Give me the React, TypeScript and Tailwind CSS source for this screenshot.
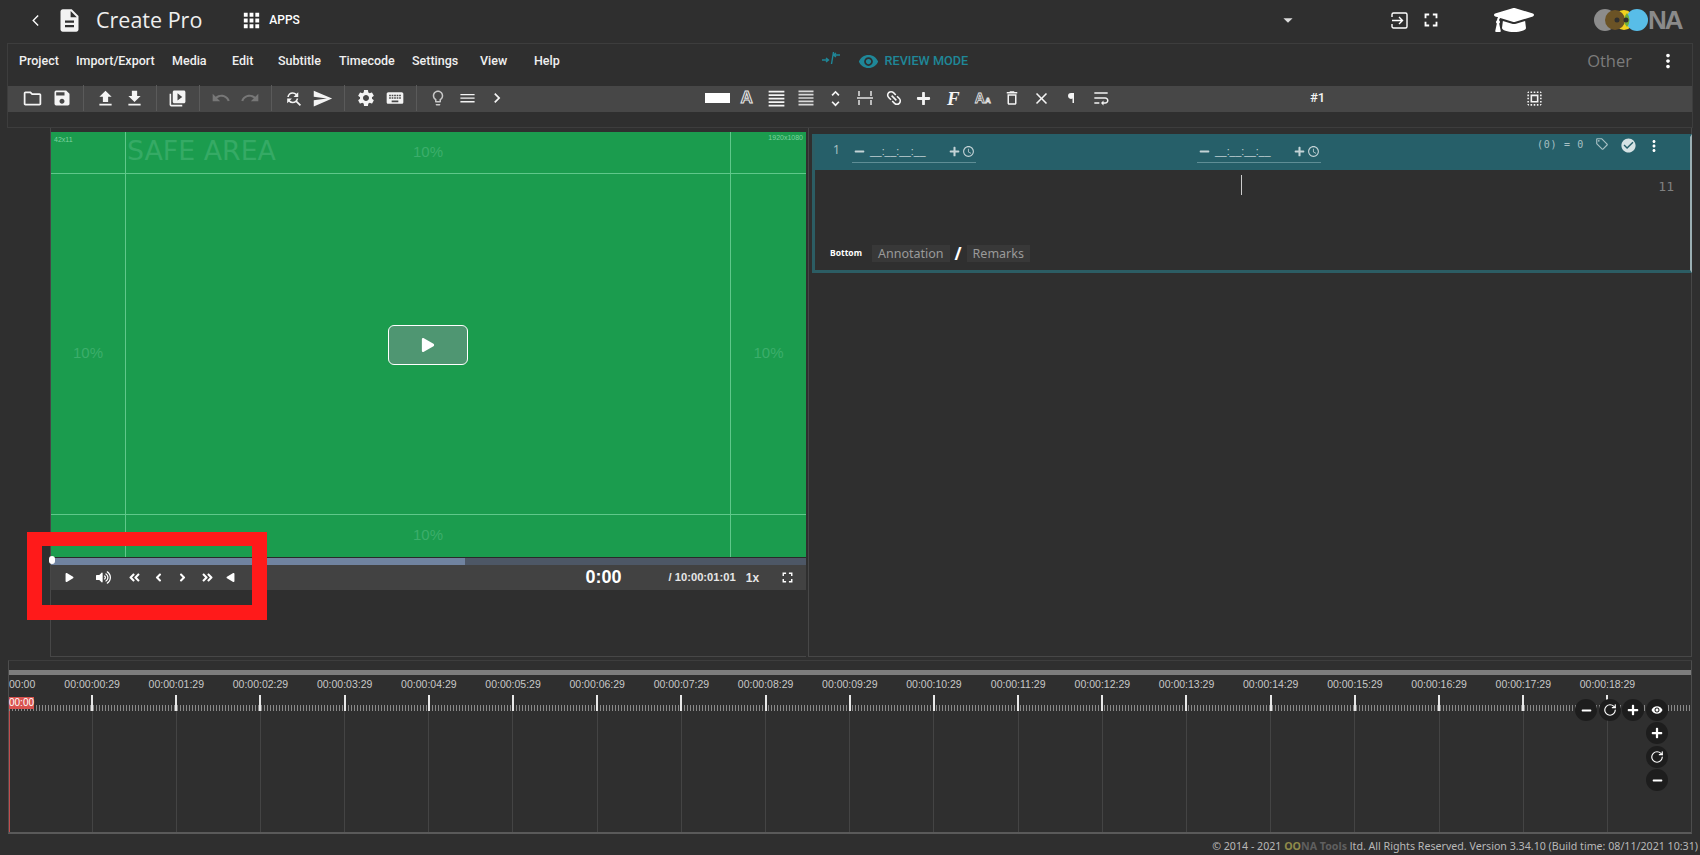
import {
  MdArrowBackIosNew,
  MdDescription,
  MdApps,
  MdArrowDropDown,
  MdOutlineFolder,
  MdSave,
  MdFileUpload,
  MdFileDownload,
  MdVideoLibrary,
  MdUndo,
  MdRedo,
  MdFindReplace,
  MdSend,
  MdSettings,
  MdKeyboard,
  MdOutlineLightbulb,
  MdChevronRight,
  MdFormatAlignJustify,
  MdUnfoldMore,
  MdLink,
  MdDeleteOutline,
  MdClose,
  MdWrapText,
  MdSelectAll,
  MdFullscreen,
  MdMoreVert,
  MdVisibility,
  MdAccessTime,
  MdOutlineLocalOffer,
  MdCheckCircle,
  MdDehaze,
} from "react-icons/md";
import {
  FaGraduationCap,
  FaPlay,
  FaPlus,
  FaMinus,
  FaVolumeUp,
  FaAngleDoubleLeft,
  FaAngleDoubleRight,
  FaAngleLeft,
  FaAngleRight,
} from "react-icons/fa";
import { RotateCw } from "lucide-react";

const menus = [
  { label: "Project", w: "w-[57px]" },
  { label: "Import/Export", w: "w-[96px]" },
  { label: "Media", w: "w-[60px]" },
  { label: "Edit", w: "w-[46px]" },
  { label: "Subtitle", w: "w-[61px]" },
  { label: "Timecode", w: "w-[73px]" },
  { label: "Settings", w: "w-[68px]" },
  { label: "View", w: "w-[54px]" },
  { label: "Help", w: "w-[50px]" },
];

const marks = Array.from({ length: 19 }, (_, i) => `00:00:${String(i).padStart(2, "0")}:29`);

function Slot({ children }: { children: React.ReactNode }) {
  return <div className="w-[29.5px] h-full flex items-center justify-center shrink-0">{children}</div>;
}

function Sep() {
  return (
    <div className="w-[13.5px] h-[26px] flex justify-center shrink-0">
      <div className="w-px h-full bg-[#5a5a5a]" />
    </div>
  );
}

function ExitIcon() {
  return (
    <svg width="17" height="17" viewBox="0 0 17 17" fill="none" stroke="white" strokeWidth="1.4">
      <path d="M1 5V2.5A1.5 1.5 0 0 1 2.5 1h12A1.5 1.5 0 0 1 16 2.5v12a1.5 1.5 0 0 1-1.5 1.5h-12A1.5 1.5 0 0 1 1 14.5V12" />
      <path d="M1 8.5h10M8 5l3.5 3.5L8 12" />
    </svg>
  );
}

function Logo() {
  return (
    <div className="flex items-center h-[22px]">
      <svg width="54" height="22" viewBox="0 0 54 22">
        <circle cx="11" cy="11" r="11" fill="#8c8c8c" />
        <circle cx="30" cy="11" r="10" fill="#f2d21f" />
        <circle cx="43" cy="11" r="11" fill="#58bde8" />
        <circle cx="21" cy="11" r="10" fill="#6b5326" />
        <path d="M33 4a11 11 0 0 1 0 14a10 10 0 0 1 0-14z" fill="#6fae3a" />
        <circle cx="23" cy="11" r="2.500" fill="#2f2f2f" />
        <circle cx="32" cy="11" r="2.500" fill="#2f2f2f" />
      </svg>
      <span className="font-['Liberation_Sans',sans-serif] font-bold text-[26px] leading-none text-[#8a8a8a] tracking-[-2px]">
        NA
      </span>
    </div>
  );
}

function Header() {
  return (
    <header className="h-[43px] pb-[3px] flex items-center shrink-0 text-white">
      <div className="w-[29px] ml-[29px] flex items-center">
        <MdArrowBackIosNew size={13} />
      </div>
      <MdDescription size={27} className="ml-[-2px] text-[#f2f2f2]" />
      <span className="ml-[13px] font-['Open_Sans',sans-serif] text-[21.500px] text-[#eeeeee]">Create Pro</span>
      <MdApps size={23} className="ml-[38px]" />
      <span className="ml-[6px] font-['Roboto',sans-serif] font-medium text-[12px]">APPS</span>
      <MdArrowDropDown size={22} className="ml-[977px] text-[#dddddd]" />
      <div className="ml-[92px]">
        <ExitIcon />
      </div>
      <MdFullscreen size={22} className="ml-[12px]" />
      <FaGraduationCap size={40} className="ml-[52px]" />
      <div className="ml-[60px]">
        <Logo />
      </div>
    </header>
  );
}

function Toolbar() {
  return (
    <div className="h-[26px] pb-[2px] bg-[#474747] flex items-center pl-[10px] text-[#f4f4f4] shrink-0">
      <Slot><MdOutlineFolder size={21} /></Slot>
      <Slot><MdSave size={20} /></Slot>
      <Sep />
      <Slot><MdFileUpload size={21} /></Slot>
      <Slot><MdFileDownload size={21} /></Slot>
      <Sep />
      <Slot><MdVideoLibrary size={19} /></Slot>
      <Sep />
      <Slot><MdUndo size={20} className="text-[#777777]" /></Slot>
      <Slot><MdRedo size={20} className="text-[#777777]" /></Slot>
      <Sep />
      <Slot><MdFindReplace size={19} /></Slot>
      <Slot><MdSend size={21} /></Slot>
      <Sep />
      <Slot><MdSettings size={20} /></Slot>
      <Slot><MdKeyboard size={20} /></Slot>
      <Sep />
      <Slot><MdOutlineLightbulb size={18} className="text-[#c8c8c8]" /></Slot>
      <Slot><MdDehaze size={17} /></Slot>
      <Slot><MdChevronRight size={20} /></Slot>

      <div className="w-[25px] h-[10px] bg-white ml-[193px] mr-[2px] shrink-0" />
      <Slot>
        <span className="font-['Liberation_Sans',sans-serif] font-bold text-[17px] text-transparent [-webkit-text-stroke:1px_#e8e8e8]">A</span>
      </Slot>
      <Slot><MdFormatAlignJustify size={21} /></Slot>
      <Slot><MdFormatAlignJustify size={20} className="text-[#d8d8d8]" /></Slot>
      <Slot><MdUnfoldMore size={21} /></Slot>
      <Slot>
        <svg width="16" height="14" viewBox="0 0 16 14" fill="none" stroke="#e4e4e4" strokeWidth="1.5">
          <path d="M2 0v5M14 0v5M2 9v5M14 9v5M0 7h16" />
        </svg>
      </Slot>
      <Slot><MdLink size={20} className="rotate-45" /></Slot>
      <Slot><FaPlus size={15} /></Slot>
      <Slot>
        <span className="font-['Liberation_Serif',serif] italic font-bold text-[19px] leading-none">F</span>
      </Slot>
      <Slot>
        <span className="font-['Liberation_Sans',sans-serif] font-bold text-[14px] leading-none text-transparent [-webkit-text-stroke:0.8px_#e8e8e8]">A<span className="text-[8px]">A</span></span>
      </Slot>
      <Slot><MdDeleteOutline size={18} /></Slot>
      <Slot><MdClose size={19} /></Slot>
      <Slot>
        <svg width="6" height="10" viewBox="0 0 6 10" fill="#f4f4f4">
          <path d="M3 0h3v10H4.500V5.500A3 3 0 0 1 0 3a3 3 0 0 1 3-3z" />
        </svg>
      </Slot>
      <Slot><MdWrapText size={20} /></Slot>

      <span className="ml-[194.500px] font-['Roboto',sans-serif] font-medium text-[13px] w-[16px]">#1</span>
      <MdSelectAll size={19} className="ml-[199px]" />
    </div>
  );
}

function MenuPanel() {
  return (
    <div className="mx-[7px] h-[85px] border border-[#3d3d3d] flex flex-col shrink-0">
      <nav className="h-[42px] pb-[8px] flex items-center pl-[11px] text-[#f0f0f0] font-['Roboto',sans-serif] font-medium text-[12.5px] shrink-0">
        {menus.map((m) => (
          <span key={m.label} className={m.w}>{m.label}</span>
        ))}
        <svg width="20" height="14" viewBox="0 0 20 14" fill="none" stroke="#1f8798" strokeWidth="1.4" className="ml-[236.500px] -mt-[6px]">
          <path d="M1 9h6M5 7l2.500 2-2.500 2M19 4h-6M15 2l-2.500 2 2.500 2M10.500 13l2-12" />
        </svg>
        <MdVisibility size={21} className="ml-[17px] text-[#1f8798]" />
        <span className="ml-[6px] text-[12.700px] text-[#1f8798]">REVIEW MODE</span>
        <span className="ml-auto mr-[25px] font-['Open_Sans',sans-serif] font-normal text-[16.500px] text-[#7c7c7c]">Other</span>
        <MdMoreVert size={22} className="mr-[13px] text-white" />
      </nav>
      <Toolbar />
    </div>
  );
}

function SafeCell({ className, children }: { className?: string; children?: React.ReactNode }) {
  return (
    <div className={`flex items-center justify-center font-['Liberation_Sans',sans-serif] text-[15px] text-[#3bae6b] ${className ?? ""}`}>
      {children}
    </div>
  );
}

function Player() {
  return (
    <div className="w-[756px] h-full border-l border-b border-[#474747] flex flex-col pt-[4px]">
      <div className="h-[425px] bg-[#1b9c4e] grid grid-cols-[75px_1fr_76px] grid-rows-[42px_1fr_43px] shrink-0">
        <SafeCell className="items-start justify-start pl-[3px] pt-[3px] border-r border-b border-[#5fc88a] !text-[7px] !text-[#7fd3a0]">42x11</SafeCell>
        <SafeCell className="relative border-b border-[#5fc88a]">
          10%
          <span className="absolute left-[1px] top-[1px] font-['DejaVu_Sans',sans-serif] text-[26.800px] leading-[36px] text-[#35aa65]">SAFE AREA</span>
        </SafeCell>
        <SafeCell className="items-start justify-end pr-[3px] pt-[1px] border-l border-b border-[#5fc88a] !text-[7px] !text-[#7fd3a0]">1920x1080</SafeCell>
        <SafeCell className="pt-[18px] border-r border-[#5fc88a]">10%</SafeCell>
        <div className="flex items-center justify-center pt-[1px]">
          <div className="w-[80px] h-[40px] rounded-[6px] border border-white bg-[#4f9672] flex items-center justify-center text-white">
            <FaPlay size={14} />
          </div>
        </div>
        <SafeCell className="pt-[18px] border-l border-[#5fc88a]">10%</SafeCell>
        <SafeCell className="border-t border-r border-[#5fc88a]" />
        <SafeCell className="pb-[2px] border-t border-[#5fc88a]">10%</SafeCell>
        <SafeCell className="border-t border-l border-[#5fc88a]" />
      </div>
      <div className="relative h-[8px] bg-[#4d5766] border-t border-[#2a2a2a] shrink-0">
        <div className="h-full w-[414px] bg-[#7083a0]" />
        <div className="absolute left-[-2px] top-[-2px] w-[6px] h-[8px] rounded-full bg-white" />
      </div>
      <div className="h-[25px] bg-[#424242] flex items-center text-white shrink-0">
        <FaPlay size={9} className="ml-[13.500px]" />
        <FaVolumeUp size={15} className="ml-[22px]" />
        <FaAngleDoubleLeft size={13} className="ml-[17px]" />
        <FaAngleLeft size={13} className="ml-[11px]" />
        <FaAngleRight size={13} className="ml-[11px]" />
        <FaAngleDoubleRight size={13} className="ml-[12px]" />
        <FaPlay size={9} className="ml-[12px] rotate-180" />
        <span className="ml-[351px] font-['Liberation_Sans',sans-serif] font-bold text-[18px]">0:00</span>
        <span className="ml-[47px] font-['Liberation_Sans',sans-serif] font-bold text-[11.200px] text-[#e6e6e6]">/ 10:00:01:01</span>
        <span className="ml-[10px] font-['Liberation_Sans',sans-serif] font-bold text-[12px] text-[#e6e6e6]">1x</span>
        <MdFullscreen size={17} className="ml-[20px]" />
      </div>
    </div>
  );
}

function Timecode() {
  return (
    <div className="w-[124px] h-[26px] border-b border-[#5f8e96] flex items-center text-[#c4d3d6] pt-[4px]">
      <div className="w-[16px] -ml-[1px] flex justify-center shrink-0"><FaMinus size={11} /></div>
      <span className="ml-[3px] w-[66px] font-['Liberation_Sans',sans-serif] text-[10.500px]">__:__:__:__</span>
      <div className="w-[16px] ml-[10px] flex justify-center shrink-0"><FaPlus size={11} /></div>
      <MdAccessTime size={13} className="shrink-0" />
    </div>
  );
}

function SubtitleCard() {
  return (
    <div className="mt-[6px] ml-[3px] w-[880px] h-[139px] border-[3px] border-r-2 border-[#2c5d64] border-t-[#265f69] border-r-[#9bb0b4] flex flex-col">
      <div className="h-[33px] bg-[#265f69] flex items-start pl-[18px] text-[#c4d3d6] shrink-0">
        <span className="w-[17px] mt-[4px] font-['Noto_Sans',sans-serif] text-[12px] text-[#a8c0c4]">1</span>
        <div className="ml-[2px]"><Timecode /></div>
        <div className="ml-[221px]">
          <Timecode />
        </div>
        <span className="ml-[216px] font-['DejaVu_Sans_Mono',monospace] text-[10px] tracking-[0.7px] text-[#a8c0c4] whitespace-pre">(0) = 0</span>
        <MdOutlineLocalOffer size={14} className="ml-[11px] text-[#a8c0c4]" />
        <MdCheckCircle size={17} className="ml-[11px] text-[#d5e2e4]" />
        <MdMoreVert size={18} className="ml-[8px] text-white" />
      </div>
      <div className="flex-1 flex flex-col min-h-0">
        <div className="h-[74px] flex justify-end pt-[5px]">
          <div className="w-px h-[20px] bg-[#cccccc] mr-[416px]" />
          <span className="mr-[16px] font-['DejaVu_Sans_Mono',monospace] text-[13px] leading-[24px] text-[#808080]">11</span>
        </div>
        <div className="flex items-center pl-[15px] mt-[1px] font-['Noto_Sans',sans-serif]">
          <span className="w-[42px] font-bold text-[8.500px] text-white">Bottom</span>
          <span className="h-[17px] px-[6px] bg-[#383838] text-[12.500px] leading-[17px] text-[#9a9a9a]">Annotation</span>
          <span className="w-[17px] text-center font-bold text-[17px] text-white leading-none">/</span>
          <span className="h-[17px] px-[6px] bg-[#383838] text-[12.500px] leading-[17px] text-[#9a9a9a]">Remarks</span>
        </div>
      </div>
    </div>
  );
}

function ZoomBtn({ children }: { children: React.ReactNode }) {
  return (
    <div className="w-[22px] h-[22px] rounded-full bg-[#1d1d1d] flex items-center justify-center text-white">
      {children}
    </div>
  );
}

function Timeline() {
  return (
    <div className="relative mt-[3px] mx-[8px] h-[174px] border-t border-[#3d3d3d] border-b-2 border-x border-b-[#5a5a5a] border-x-[#4d4d4d] flex flex-col shrink-0">
      <div className="h-[5px] mt-[9px] bg-[#7d7d7d] shrink-0" />
      <div className="flex h-[20px] items-center font-['Liberation_Sans',sans-serif] text-[10.5px] text-[#c8c8c8] shrink-0">
        <span className="w-[41px] shrink-0">00:00</span>
        {marks.map((m) => (
          <span key={m} className="w-[84.2px] shrink-0 text-center">{m}</span>
        ))}
      </div>
      <div className="relative flex h-[16px] shrink-0 bg-[repeating-linear-gradient(90deg,#8a8a8a_0,#8a8a8a_1px,transparent_1px,transparent_3px)] bg-[length:100%_6px] bg-bottom bg-no-repeat">
        {marks.map((m, i) => (
          <div key={m} className={`${i === 0 ? "w-[84px]" : "w-[84.2px]"} shrink-0 border-r-2 border-[#e8e8e8]`} />
        ))}
      </div>
      <div className="flex flex-1 min-h-0 border-l border-[#c24d4d]">
        {marks.map((m, i) => (
          <div key={m} className={`${i === 0 ? "w-[82.5px]" : "w-[84.2px]"} shrink-0 border-r border-[#444444]`} />
        ))}
      </div>

      <div className="absolute left-0 top-[36px] w-[25px] h-[12px] bg-[#d9534f] font-['Liberation_Sans',sans-serif] text-[10px] leading-[12px] text-white text-right pr-[1px]">00:00</div>

      <div className="absolute left-[1566px] top-[38px] w-[104px] flex gap-[1.500px]">
        <ZoomBtn><FaMinus size={11} /></ZoomBtn>
        <ZoomBtn><RotateCw size={14} strokeWidth={2} /></ZoomBtn>
        <ZoomBtn><FaPlus size={12} /></ZoomBtn>
        <ZoomBtn><MdVisibility size={12} /></ZoomBtn>
      </div>
      <div className="absolute left-[1637px] top-[61px] flex flex-col gap-[1.500px]">
        <ZoomBtn><FaPlus size={12} /></ZoomBtn>
        <ZoomBtn><RotateCw size={14} strokeWidth={2} /></ZoomBtn>
        <ZoomBtn><FaMinus size={11} /></ZoomBtn>
      </div>
    </div>
  );
}

export default function App() {
  return (
    <div className="relative w-[1700px] h-[855px] overflow-hidden bg-[#2f2f2f] flex flex-col font-['Roboto',sans-serif]">
      <Header />
      <MenuPanel />
      <main className="h-[529px] flex shrink-0">
        <div className="w-[50px] shrink-0" />
        <Player />
        <div className="ml-[2px] w-[884px] h-full border border-t-0 border-[#474747]">
          <SubtitleCard />
        </div>
      </main>
      <Timeline />
      <footer className="h-[21px] pt-[5px] pr-[2px] flex items-center justify-end font-['Noto_Sans',sans-serif] text-[10.650px] text-[#b8b8b8]">
        © 2014 - 2021&nbsp;
        <span className="text-[#5f5f5f] font-bold">
          <span className="text-[#8f8a4a]">OO</span>NA Tools
        </span>
        &nbsp;ltd. All Rights Reserved. Version 3.34.10 (Build time: 08/11/2021 10:31)
      </footer>

      {/* red highlight drawn on top of the screenshot */}
      <div className="absolute left-[27px] top-[532px] w-[240px] h-[88px] border-[15px] border-t-[14px] border-[#ff1a1a]" />
    </div>
  );
}
